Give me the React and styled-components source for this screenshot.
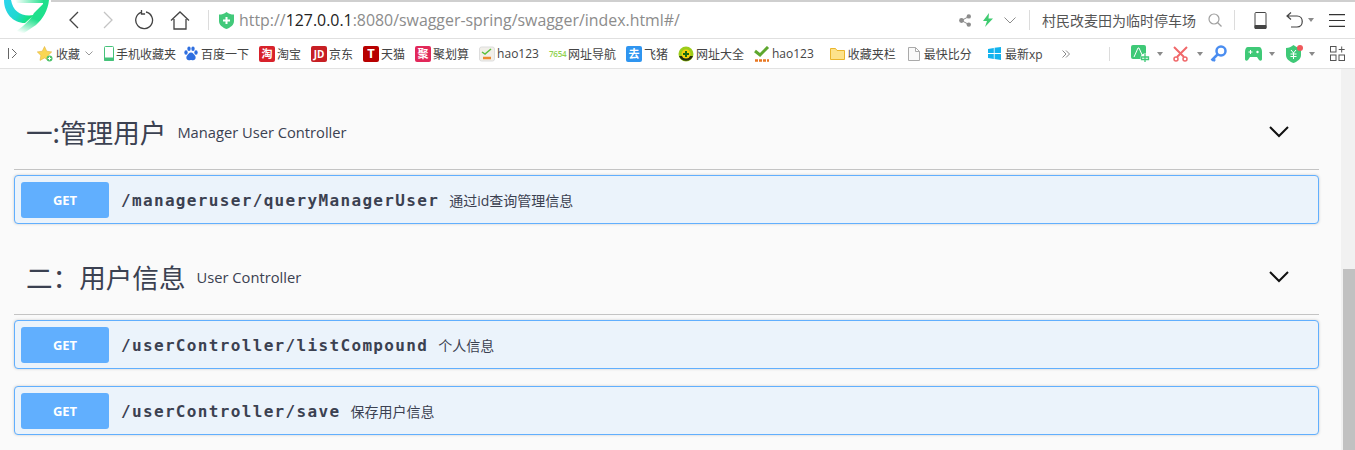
import React from 'react';
import styled, { createGlobalStyle } from 'styled-components';

const GlobalStyle = createGlobalStyle`
  html, body {
    margin: 0;
    padding: 0;
    height: 100%;
    overflow: hidden;
    background: #fafafa;
  }
  * {
    box-sizing: border-box;
  }
`;

const CJK = `"Open Sans", "Noto Sans CJK SC", sans-serif`;

const Shell = styled.div`
  width: 1355px;
  height: 450px;
  display: flex;
  flex-direction: column;
  overflow: hidden;
  font-family: ${CJK};
`;

const TopBar = styled.header`
  height: 39px;
  flex: none;
  display: flex;
  align-items: center;
  background: #fff;
  border-top: 2px solid #cfcfcf;
  border-bottom: 1px solid #e0e0e0;
`;

const BookmarkBar = styled.nav`
  height: 30px;
  flex: none;
  display: flex;
  align-items: center;
  background: #fff;
  border-bottom: 1px solid #e2e2e2;
`;

const Glyph = styled.svg`
  flex: none;
  display: block;
  margin-left: ${({ $ml }) => $ml || 0}px;
`;

const Logo = styled.svg`
  flex: none;
  display: block;
  align-self: flex-start;
  margin: -2px 0 0 0;
`;

const Divider = styled.span`
  flex: none;
  width: 1px;
  height: ${({ $h }) => $h || 20}px;
  background: #dcdcdc;
  margin-left: ${({ $ml }) => $ml || 0}px;
`;

const Url = styled.span`
  margin-left: 5px;
  font-size: 15.9px;
  color: #8c8c8c;
  white-space: nowrap;
  b {
    font-weight: 400;
    color: #222;
  }
`;

const Spacer = styled.span`
  flex: 1;
`;

const SearchText = styled.span`
  margin-left: 12px;
  width: 154px;
  font-size: 14px;
  color: #555;
  white-space: nowrap;
`;

const Bookmark = styled.a`
  flex: none;
  display: flex;
  align-items: center;
  gap: ${({ $gap }) => ($gap === undefined ? 2 : $gap)}px;
  margin-left: ${({ $ml }) => ($ml === undefined ? 10 : $ml)}px;
  font-size: 12px;
  color: #444;
  white-space: nowrap;
`;

const Badge = styled.span`
  width: 16px;
  height: 16px;
  flex: none;
  display: flex;
  align-items: center;
  justify-content: center;
  border-radius: 2px;
  background: ${({ $bg }) => $bg};
  color: #fff;
  font-size: ${({ $size }) => $size || 11}px;
  font-weight: 700;
  line-height: 1;
`;

const TinyLabel = styled.span`
  width: 17px;
  flex: none;
  font-size: 8px;
  font-weight: 600;
  letter-spacing: -0.2px;
  color: #8fd14f;
`;

const Body = styled.div`
  flex: 1;
  min-height: 0;
  display: flex;
  background: #fafafa;
`;

const Main = styled.main`
  flex: 1;
  padding: 27px 22px 0 14px;
  overflow: hidden;
`;

const Scrollbar = styled.div`
  width: 14px;
  flex: none;
  background: #f1f1f1;
  padding: 200px 0 0 2px;
`;

const Thumb = styled.div`
  height: 200px;
  background: #c1c1c1;
`;

const Section = styled.section`
  margin-bottom: 17px;
`;

const TagHeading = styled.div`
  height: 74px;
  display: flex;
  align-items: center;
  padding: 0 30px 2px 12px;
  border-bottom: 1px solid #c4c4c4;
  margin-bottom: 5px;
  color: #3b4151;
`;

const TagTitle = styled.h4`
  margin: 0;
  font-size: 26.6px;
  font-weight: 400;
  line-height: 1.2;
  font-family: "Noto Sans CJK SC", serif;
`;

const TagNote = styled.small`
  margin-left: 11px;
  flex: 1;
  font-size: 14.7px;
  font-family: "Open Sans", sans-serif;
  padding-top: 1px;
`;

const OpRow = styled.div`
  height: 49px;
  display: flex;
  align-items: center;
  padding: 0 6px;
  margin-bottom: 17px;
  background: #ebf3fb;
  border: 1px solid #61affe;
  border-radius: 4px;
  box-shadow: 0 0 3px rgba(0, 0, 0, 0.19);
  color: #3b4151;
`;

const Method = styled.span`
  width: 88px;
  height: 36px;
  flex: none;
  display: flex;
  align-items: center;
  justify-content: center;
  background: #61affe;
  border-radius: 3px;
  color: #fff;
  font-size: 13px;
  font-weight: 700;
  font-family: "Open Sans", sans-serif;
`;

const Path = styled.span`
  margin-left: 12px;
  padding-top: 1px;
  font-family: "DejaVu Sans Mono", monospace;
  font-size: 16px;
  font-weight: 700;
  letter-spacing: 1.34px;
  white-space: nowrap;
`;

const Summary = styled.span`
  margin-left: 10px;
  font-size: 14px;
  white-space: nowrap;
`;

const Chevron = () => (
  <Glyph width="20" height="12" viewBox="0 0 20 12" fill="none" stroke="#111" strokeWidth="2">
    <path d="M1 1l9 9 9-9" />
  </Glyph>
);

const Caret = ({ ml }) => (
  <Glyph $ml={ml} width="6" height="4" viewBox="0 0 6 4">
    <path d="M0 0h6L3 4z" fill="#8a8a8a" />
  </Glyph>
);

const operations = {
  manager: [{ path: '/manageruser/queryManagerUser', summary: '通过id查询管理信息' }],
  user: [
    { path: '/userController/listCompound', summary: '个人信息' },
    { path: '/userController/save', summary: '保存用户信息' },
  ],
};

function Operation({ path, summary }) {
  return (
    <OpRow>
      <Method>GET</Method>
      <Path>{path}</Path>
      <Summary>{summary}</Summary>
    </OpRow>
  );
}

function Tag({ title, note, ops }) {
  return (
    <Section>
      <TagHeading>
        <TagTitle>{title}</TagTitle>
        <TagNote>{note}</TagNote>
        <Chevron />
      </TagHeading>
      {ops.map((op) => (
        <Operation key={op.path} {...op} />
      ))}
    </Section>
  );
}

function Toolbar() {
  return (
    <TopBar>
      <Logo width="51" height="33" viewBox="0 0 51 33" fill="none">
        <defs>
          <linearGradient id="lg" x1="0" y1="0" x2="1" y2="0.5">
            <stop offset="0" stopColor="#2bd4ee" />
            <stop offset="0.6" stopColor="#22d8d0" />
            <stop offset="1" stopColor="#13e27a" />
          </linearGradient>
          <linearGradient id="lf" x1="0.6" y1="0" x2="0.2" y2="1">
            <stop offset="0.5" stopColor="#1fe08c" />
            <stop offset="1" stopColor="#ffffff" />
          </linearGradient>
          <linearGradient id="lb" x1="0" y1="0" x2="1" y2="0">
            <stop offset="0" stopColor="#ffffff" />
            <stop offset="1" stopColor="#1fe08c" />
          </linearGradient>
        </defs>
        <rect width="51" height="33" fill="#fff" />
        <path d="M15 0h29v3H17z" fill="url(#lb)" />
        <path d="M4 0c0 13 9 23 21 23l9-8C22 17 13 12 11 0z" fill="url(#lg)" />
        <path d="M49 0c-1 10-6 19-13 25l-12 8H14c8-6 16-12 20-20l9-9V0z" fill="url(#lf)" />
      </Logo>

      <Glyph $ml={17} width="11" height="18" viewBox="0 0 11 18" fill="none" stroke="#444" strokeWidth="1.3">
        <path d="M10 1L2 9l8 8" />
      </Glyph>
      <Glyph $ml={24} width="11" height="18" viewBox="0 0 11 18" fill="none" stroke="#c4c4c4" strokeWidth="1.3">
        <path d="M1 1l8 8-8 8" />
      </Glyph>
      <Glyph $ml={20} width="20" height="20" viewBox="0 0 20 20" fill="none" stroke="#444" strokeWidth="1.3">
        <path d="M7 2.4A8.4 8.4 0 1 0 12 2M7.5 0v4h3.6" />
      </Glyph>
      <Glyph $ml={16} width="20" height="19" viewBox="0 0 20 19" fill="none" stroke="#444" strokeWidth="1.3">
        <path d="M1 9.5L10 1l9 8.5M4 8v10h12V8" />
      </Glyph>
      <Divider $ml={18} />
      <Glyph $ml={10} width="15" height="17" viewBox="0 0 15 17">
        <path d="M0 2.5C3 2.5 5 2 7.500 0 10 2 12 2.500 15 2.500V9c0 4-3.500 6.500-7.500 8C3.500 15.500 0 13 0 9z" fill="#42c97a" />
        <path d="M7.500 5v7M4 8.500h7" stroke="#fff" strokeWidth="2" />
      </Glyph>
      <Url>
        http://<b>127.0.0.1</b>:8080/swagger-spring/swagger/index.html#/
      </Url>
      <Spacer />
      <Glyph width="12" height="13" viewBox="0 0 12 13" fill="#8c8c8c">
        <circle cx="2.500" cy="6.500" r="2.400" />
        <circle cx="9.800" cy="2.400" r="2.200" />
        <circle cx="9.800" cy="10.600" r="2.200" />
        <path d="M2.500 6.500l7.300-4M2.500 6.500l7.300 4" stroke="#8c8c8c" />
      </Glyph>
      <Glyph $ml={12} width="10" height="14" viewBox="0 0 10 14">
        <path d="M6 0L0 8h4l-2 6 8-8.500H5.500z" fill="#3fcb70" />
      </Glyph>
      <Glyph $ml={11} width="12" height="7" viewBox="0 0 12 7" fill="none" stroke="#8c8c8c">
        <path d="M.5.500L6 6l5.500-5.500" />
      </Glyph>
      <Divider $ml={13} />
      <SearchText>村民改麦田为临时停车场</SearchText>
      <Glyph $ml={12} width="14" height="14" viewBox="0 0 14 14" fill="none" stroke="#a0a0a0" strokeWidth="1.200">
        <circle cx="6" cy="6" r="5" />
        <path d="M9.500 9.500L13.500 13.500" />
      </Glyph>
      <Divider $ml={12} />
      <Glyph $ml={19} width="13" height="17" viewBox="0 0 13 17" fill="none" stroke="#444">
        <rect x="1" y=".5" width="11" height="16" rx="1" />
        <path d="M1 13.500h11V16.500H1z" fill="#444" />
      </Glyph>
      <Glyph $ml={19} width="17" height="16" viewBox="0 0 17 16" fill="none" stroke="#444" strokeWidth="1.200">
        <path d="M5 .5L1 4l4 3.500M1 4h10c7 0 7 11 0 11H5" />
      </Glyph>
      <Caret ml={5} />
      <Glyph $ml={15} width="16" height="13" viewBox="0 0 16 13" stroke="#333" strokeWidth="1.200">
        <path d="M0 .6h16M0 6.500h16M0 12.400h16" />
      </Glyph>
      <Glyph $ml={9} width="1" height="1" viewBox="0 0 1 1" />
    </TopBar>
  );
}

function Bookmarks() {
  return (
    <BookmarkBar>
      <Glyph $ml={8} width="9" height="11" viewBox="0 0 9 11" fill="none" stroke="#666">
        <path d="M.500 0v11M4 1l4.500 4.500L4 10" />
      </Glyph>
      <Bookmark $ml={20} $gap={3}>
        <Glyph width="16" height="16" viewBox="0 0 16 16">
          <path d="M7.500 .5l2.200 4.700 5 .7-3.600 3.500.9 5-4.500-2.400-4.500 2.400.9-5L.3 5.900l5-.7z" fill="#fad652" stroke="#e2b33c" strokeWidth=".6" />
          <circle cx="12.500" cy="12.500" r="3" fill="#4cc26a" />
          <path d="M12.500 10.800v3.400M10.800 12.500h3.400" stroke="#fff" />
        </Glyph>
        收藏
      </Bookmark>
      <Glyph $ml={5} width="8" height="5" viewBox="0 0 8 5" fill="none" stroke="#999">
        <path d="M.5.500L4 4 7.500.5" />
      </Glyph>
      <Bookmark $ml={11}>
        <Glyph width="10" height="15" viewBox="0 0 10 15" fill="none" stroke="#46c27a">
          <rect x=".5" y=".5" width="9" height="14" rx="1" />
          <path d="M.5 12h9v2.500h-9z" fill="#46c27a" />
        </Glyph>
        手机收藏夹
      </Bookmark>
      <Bookmark $ml={8} $gap={3}>
        <Glyph width="14" height="15" viewBox="0 0 14 15" fill="#2f6fe0">
          <ellipse cx="2" cy="6.500" rx="1.700" ry="2.200" />
          <ellipse cx="5" cy="2.800" rx="1.700" ry="2.300" />
          <ellipse cx="9" cy="2.800" rx="1.700" ry="2.300" />
          <ellipse cx="12" cy="6.500" rx="1.700" ry="2.200" />
          <path d="M7 6.500c2 0 3 2 4.200 3.500 1 1.500.3 4.200-2 4.200-1 0-1.400-.3-2.200-.3s-1.200.3-2.200.3c-2.300 0-3-2.700-2-4.200C4 8.500 5 6.500 7 6.500z" />
        </Glyph>
        百度一下
      </Bookmark>
      <Bookmark>
        <Badge $bg="#d8222b">淘</Badge>
        淘宝
      </Bookmark>
      <Bookmark>
        <Badge $bg="#c71f24" $size={10}>JD</Badge>
        京东
      </Bookmark>
      <Bookmark>
        <Badge $bg="#b80000" $size={13}>T</Badge>
        天猫
      </Bookmark>
      <Bookmark>
        <Badge $bg="#e2285a">聚</Badge>
        聚划算
      </Bookmark>
      <Bookmark>
        <Glyph width="16" height="16" viewBox="0 0 16 16">
          <rect x=".5" y="1" width="15" height="14" rx="2" fill="#f1efe9" stroke="#ddd" />
          <path d="M3 6l3 2 6-5" fill="none" stroke="#5abf3c" strokeWidth="1.500" />
          <path d="M4 12h8" stroke="#ec8a2e" strokeWidth="2.500" />
        </Glyph>
        hao123
      </Bookmark>
      <Bookmark $ml={10} $gap={2}>
        <TinyLabel>7654</TinyLabel>
        网址导航
      </Bookmark>
      <Bookmark>
        <Badge $bg="#2f95f0">去</Badge>
        飞猪
      </Bookmark>
      <Bookmark>
        <Glyph width="16" height="16" viewBox="0 0 16 16">
          <circle cx="8" cy="8" r="7.500" fill="#9ccc1a" />
          <path d="M1 10a7.500 7.500 0 0 0 14 0z" fill="#111" opacity=".85" />
          <circle cx="8" cy="8" r="4.500" fill="#f6d10c" />
          <path d="M8 5v6M5 8h6" stroke="#1a6b12" strokeWidth="2" />
        </Glyph>
        网址大全
      </Bookmark>
      <Bookmark>
        <Glyph width="16" height="16" viewBox="0 0 16 16" fill="none">
          <path d="M1 5l5 4 8-8" stroke="#5ea72e" strokeWidth="3" />
          <path d="M1 14.500h14" stroke="#e87722" strokeWidth="2.500" strokeDasharray="3 1" />
        </Glyph>
        hao123
      </Bookmark>
      <Bookmark $ml={16} $gap={3}>
        <Glyph width="15" height="13" viewBox="0 0 15 13">
          <path d="M.5 1.500h5l1.500 2h7.500v9H.5z" fill="#fde28a" stroke="#eab52c" />
        </Glyph>
        收藏夹栏
      </Bookmark>
      <Bookmark $ml={12} $gap={4}>
        <Glyph width="12" height="14" viewBox="0 0 12 14" fill="#fafafa" stroke="#aaa">
          <path d="M.5.5h7l4 4v9H.500zM7.500.5v4h4" />
        </Glyph>
        最快比分
      </Bookmark>
      <Bookmark $ml={16} $gap={4}>
        <Glyph width="13" height="13" viewBox="0 0 13 13" fill="#12b3ee">
          <path d="M0 2l5.800-1v5H0zM6.600.8L13 0v6H6.600zM0 7h5.800v5L0 11zM6.600 7H13v6l-6.400-.9z" />
        </Glyph>
        最新xp
      </Bookmark>
      <Glyph $ml={19} width="8" height="8" viewBox="0 0 8 8" fill="none" stroke="#888">
        <path d="M.5.5L4 4 .5 7.500M4 .5L7.500 4 4 7.500" />
      </Glyph>
      <Divider $ml={39} $h={14} />
      <Glyph $ml={21} width="19" height="18" viewBox="0 0 19 18">
        <rect width="15" height="14" rx="2" fill="#3fc977" />
        <path d="M3 12L7 3h1l4 9" fill="none" stroke="#fff" />
        <circle cx="14" cy="13" r="4.500" fill="#fff" />
        <path d="M14 9v8M10.500 12h7v2.500h-7z" fill="none" stroke="#3fc977" strokeWidth="1.300" />
      </Glyph>
      <Caret ml={7} />
      <Glyph $ml={10} width="15" height="16" viewBox="0 0 15 16" fill="none" stroke="#f0686a" strokeWidth="2">
        <path d="M1 1l10 10M14 1L4 11" />
        <circle cx="3" cy="13" r="2" strokeWidth="1.500" />
        <circle cx="12" cy="13" r="2" strokeWidth="1.500" />
      </Glyph>
      <Caret ml={9} />
      <Glyph $ml={7} width="17" height="17" viewBox="0 0 17 17" fill="none" stroke="#4a8df0" strokeWidth="2.500">
        <circle cx="11" cy="6" r="4.500" />
        <path d="M7.500 9.500L1.500 15.500M3 14l2 2" />
      </Glyph>
      <Glyph $ml={18} width="17" height="14" viewBox="0 0 17 14">
        <path d="M3 0h11c2 0 3 2 3 5v7c0 2-2 2-3 1l-2-3H5l-2 3c-1 1-3 1-3-1V5c0-3 1-5 3-5z" fill="#3fc977" />
        <path d="M3.500 5h4M5.500 3v4" stroke="#fff" />
        <circle cx="12.500" cy="5" r="1.200" fill="#fff" />
      </Glyph>
      <Caret ml={7} />
      <Glyph $ml={11} width="17" height="18" viewBox="0 0 17 18">
        <path d="M0 3c3 0 5-1 7.500-3C10 2 12 3 15 3v7c0 4-3.500 6.500-7.500 8C3.500 16.500 0 14 0 10z" fill="#3fc977" />
        <circle cx="14" cy="3" r="3" fill="#f0595b" />
        <path d="M5 5l2.500 3L10 5M4.500 9h6M4.500 11.500h6M7.500 8v6" stroke="#fff" fill="none" />
      </Glyph>
      <Caret ml={6} />
      <Glyph $ml={15} width="15" height="15" viewBox="0 0 15 15" fill="none" stroke="#555">
        <rect x=".5" y=".5" width="5.500" height="5.500" />
        <rect x=".5" y="9" width="5.500" height="5.500" />
        <rect x="9" y="9" width="5.500" height="5.500" />
        <path d="M11.700.5v6M8.700 3.500h6" />
      </Glyph>
    </BookmarkBar>
  );
}

export default function App() {
  return (
    <Shell>
      <GlobalStyle />
      <Toolbar />
      <Bookmarks />
      <Body>
        <Main>
          <Tag title="一:管理用户" note="Manager User Controller" ops={operations.manager} />
          <Tag title="二：用户信息" note="User Controller" ops={operations.user} />
        </Main>
        <Scrollbar>
          <Thumb />
        </Scrollbar>
      </Body>
    </Shell>
  );
}
